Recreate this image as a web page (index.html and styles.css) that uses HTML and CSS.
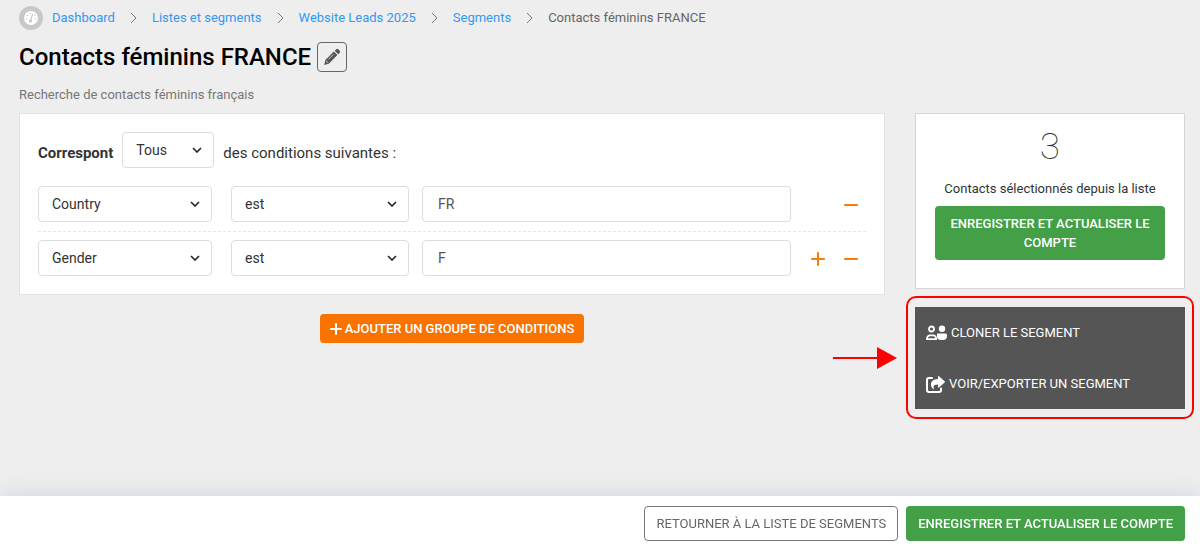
FILE: index.html
```html
<!DOCTYPE html>
<html lang="fr">

<head>
    <meta charset="UTF-8">
    <meta name="viewport" content="width=device-width, initial-scale=1.0">
    <title>Contacts féminins FRANCE</title>
    <link rel="stylesheet" href="styles.css">
</head>

<body>
    <nav class="breadcrumb" aria-label="Fil d'Ariane">
        <span class="gauge">
            <svg viewBox="0 0 24 24" width="24" height="24" aria-hidden="true">
                <circle cx="12" cy="12" r="12" fill="#c8c8c8"/>
                <circle cx="12" cy="12" r="7" fill="#fff"/>
                <g fill="none" stroke="#c8c8c8" stroke-linecap="round">
                    <path d="M11.5 14.5l2-6" stroke-width="1.2"/>
                    <path d="M7.5 13h.1M8.3 9.3h.1M11 7.3h.1M15.8 9.3h.1M16.5 13h.1" stroke-width="1.4"/>
                </g>
                <circle cx="11.5" cy="15" r="1.6" fill="#c8c8c8"/>
            </svg>
        </span>
        <a href="#">Dashboard</a>
        <svg class="sep" viewBox="0 0 7 12"><path d="M1 1l5 5-5 5"/></svg>
        <a href="#">Listes et segments</a>
        <svg class="sep" viewBox="0 0 7 12"><path d="M1 1l5 5-5 5"/></svg>
        <a href="#">Website Leads 2025</a>
        <svg class="sep" viewBox="0 0 7 12"><path d="M1 1l5 5-5 5"/></svg>
        <a href="#">Segments</a>
        <svg class="sep" viewBox="0 0 7 12"><path d="M1 1l5 5-5 5"/></svg>
        <span>Contacts féminins FRANCE</span>
    </nav>

    <header class="title-bar">
        <h1>Contacts féminins FRANCE</h1>
        <button type="button" class="btn-edit" aria-label="Modifier">
            <svg viewBox="0 0 18 18" width="18" height="18" aria-hidden="true">
                <path fill="#555" d="M13.2 1.3a1.5 1.5 0 0 1 2.1 0l1.4 1.4a1.5 1.5 0 0 1 0 2.1l-1.5 1.5-3.5-3.5zM10.9 3.6l3.5 3.5-8.6 8.6L1.2 17l1.2-4.9z"/>
                <path stroke="#eee" stroke-width=".7" d="M10.500 6.300L5.500 11.300M3 13.200l1 .2.3 1 .9.3" fill="none"/>
            </svg>
        </button>
    </header>
    <p class="description">Recherche de contacts féminins français</p>

    <div class="layout">
        <main>
            <form class="card conditions" id="segment">
                <div class="match">
                    <label for="match"><strong>Correspont</strong></label>
                    <select id="match" class="match-select">
                        <option>Tous</option>
                    </select>
                    <span class="match-text">des conditions suivantes :</span>
                </div>

                <div class="condition">
                    <select class="field" aria-label="Champ">
                        <option>Country</option>
                    </select>
                    <select class="operator" aria-label="Opérateur">
                        <option>est</option>
                    </select>
                    <input type="text" class="value" aria-label="Valeur" value="FR">
                    <div class="actions">
                        <button type="button" class="btn-icon" aria-label="Supprimer">
                            <svg viewBox="0 0 14 14"><path d="M1 7h12"/></svg>
                        </button>
                    </div>
                </div>

                <div class="condition">
                    <select class="field" aria-label="Champ">
                        <option>Gender</option>
                    </select>
                    <select class="operator" aria-label="Opérateur">
                        <option>est</option>
                    </select>
                    <input type="text" class="value" aria-label="Valeur" value="F">
                    <div class="actions">
                        <button type="button" class="btn-icon" aria-label="Ajouter">
                            <svg viewBox="0 0 14 14"><path d="M1 7h12M7 1v12"/></svg>
                        </button>
                        <button type="button" class="btn-icon" aria-label="Supprimer">
                            <svg viewBox="0 0 14 14"><path d="M1 7h12"/></svg>
                        </button>
                    </div>
                </div>
            </form>

            <div class="add-group">
                <button type="button" class="btn btn-orange">
                    <svg viewBox="0 0 12 12" width="12" height="12" aria-hidden="true"><path d="M1 6h10M6 1v10" stroke="#fff" stroke-width="2" stroke-linecap="round"/></svg>
                    AJOUTER UN GROUPE DE CONDITIONS
                </button>
            </div>
        </main>

        <aside>
            <div class="card summary">
                <div class="count">3</div>
                <p>Contacts sélectionnés depuis la liste</p>
                <button type="submit" form="segment" class="btn btn-green">ENREGISTRER ET ACTUALISER LE COMPTE</button>
            </div>

            <div class="tools">
                <a href="#">
                    <svg viewBox="0 0 21 16" width="21" height="16" aria-hidden="true">
                        <g fill="none" stroke="#fff" stroke-width="1.8">
                            <circle cx="5.5" cy="4" r="2.5"/>
                            <path d="M1 14.200v-.8a3 3 0 0 1 3-3h3.200a3 3 0 0 1 3 3v.8z" stroke-linejoin="round"/>
                        </g>
                        <circle cx="16" cy="3.8" r="3.200" fill="#fff"/>
                        <path fill="#fff" d="M11.500 8.500h8a1.500 1.500 0 0 1 1.500 1.500v1a4 4 0 0 1-4 4h-2a4 4 0 0 1-4-4v-2a.5.5 0 0 1 .5-.5z"/>
                    </svg>
                    CLONER LE SEGMENT
                </a>
                <a href="#">
                    <svg viewBox="0 0 19 17" width="19" height="17" aria-hidden="true">
                        <path d="M6 2H3a2 2 0 0 0-2 2v10a2 2 0 0 0 2 2h10a2 2 0 0 0 2-2v-1.500" fill="none" stroke="#fff" stroke-width="2" stroke-linecap="round"/>
                        <path fill="#fff" d="M12 .6c0-.6.6-.8 1-.4l5.600 5c.4.4.4.8 0 1.200l-5.600 5c-.4.4-1 .1-1-.5V8.500c-3.500 0-5 1-4.200 4.200.1.500-.4.700-.8.3C3.200 9.500 4.500 3.200 12 3z"/>
                    </svg>
                    VOIR/EXPORTER UN SEGMENT
                </a>
                <div class="highlight"></div>
                <svg class="arrow" viewBox="0 0 64 24" width="64" height="24" aria-hidden="true">
                    <path d="M0 12h46" stroke="#f00" stroke-width="2"/>
                    <path d="M44 1l20 11-20 11z" fill="#f00"/>
                </svg>
            </div>
        </aside>
    </div>

    <footer>
        <button type="button" class="btn btn-outline">RETOURNER À LA LISTE DE SEGMENTS</button>
        <button type="submit" form="segment" class="btn btn-green">ENREGISTRER ET ACTUALISER LE COMPTE</button>
    </footer>
</body>

</html>
```

FILE: styles.css
```css
* {
    margin: 0;
    padding: 0;
    box-sizing: border-box;
}

body {
    min-height: 100vh;
    padding: 5px 15px 64px 19px;
    font-family: Roboto, sans-serif;
    font-size: 13px;
    line-height: 18px;
    color: #333;
    background-color: #eee;
}

a {
    color: #3598f3;
    text-decoration: none;
}

button,
input,
select {
    font-family: inherit;
    font-size: 14px;
    color: inherit;
}

button {
    cursor: pointer;
}

/* Breadcrumb */
.breadcrumb {
    display: flex;
    align-items: center;
    height: 25px;
    color: #666;
}

.gauge {
    height: 24px;
    margin-right: 9px;
}

.sep {
    width: 7px;
    height: 12px;
    margin: 0 15px;
    fill: none;
    stroke: #777;
}

/* Title */
.title-bar {
    display: flex;
    align-items: center;
    gap: 6px;
    margin-top: 12px;
}

h1 {
    font-size: 24px;
    line-height: 30px;
    font-weight: 500;
    color: #000;
}

.btn-edit {
    display: flex;
    align-items: center;
    justify-content: center;
    width: 30px;
    height: 30px;
    background: none;
    border: 1px solid #666;
    border-radius: 4px;
}

.description {
    margin: 14px 0 9px;
    color: #777;
}

.layout {
    display: grid;
    grid-template-columns: 1fr 270px;
    gap: 30px;
    align-items: start;
}

.card {
    background-color: #fff;
    border: 1px solid #e3e3e3;
}

/* Conditions */
.conditions {
    padding: 18px;
}

select,
.value {
    height: 36px;
    padding: 0 15px;
    background-color: #fff;
    border: 1px solid #ddd;
    border-radius: 4px;
}

select {
    appearance: none;
    padding: 0 30px 0 13px;
    background-image: url("data:image/svg+xml,%3Csvg xmlns='http://www.w3.org/2000/svg' width='10' height='6'%3E%3Cpath d='M1 1l4 4 4-4' fill='none' stroke='%23222' stroke-width='1.6'/%3E%3C/svg%3E");
    background-repeat: no-repeat;
    background-position: right 11px center;
}

.match {
    display: flex;
    align-items: center;
    gap: 9px;
    margin-bottom: 9px;
    font-size: 15px;
}

.match label,
.match-text {
    padding-top: 6px;
}

.match-select {
    width: 92px;
}

.condition {
    display: grid;
    grid-template-columns: 193fr 191fr 369fr 75px;
    align-items: center;
    padding: 9px 0;
}

.condition + .condition {
    padding: 8px 0 0;
    border-top: 1px dashed #e6e6e6;
}

.field {
    margin-right: 19px;
}

.operator {
    margin-right: 13px;
}

.value {
    min-width: 0;
    color: #555;
}

.actions {
    display: flex;
    justify-content: flex-end;
    gap: 19px;
    padding: 2px 8px 0 0;
}

.btn-icon {
    width: 14px;
    height: 14px;
    background: none;
    border: none;
}

.btn-icon svg {
    display: block;
    stroke: #f97b0c;
    stroke-width: 2;
    stroke-linecap: round;
}

/* Buttons */
.btn {
    padding: 7px 11px;
    line-height: 19px;
    font-size: 13px;
    color: #fff;
    border: 1px solid transparent;
    border-radius: 4px;
}

.btn-green {
    font-weight: 500;
    background-color: #43a047;
}

.btn-orange {
    display: flex;
    align-items: center;
    gap: 3px;
    padding: 4px 9px;
    font-weight: 500;
    background-color: #f97300;
}

.btn-outline {
    color: #666;
    background-color: #fff;
    border-color: #777;
}

.add-group {
    display: flex;
    justify-content: center;
    margin-top: 19px;
}

/* Sidebar */
.summary {
    padding: 14px 19px 28px;
    border-color: #d5d5d5;
    text-align: center;
}

.count {
    font-size: 37px;
    line-height: 38px;
    font-weight: 100;
}

.summary p {
    margin: 14px 0 8px;
}

.summary .btn {
    width: 100%;
}

.tools {
    position: relative;
    display: flex;
    flex-direction: column;
    gap: 33px;
    margin-top: 18px;
    padding: 17px 11px 16px;
    background-color: #555;
}

.tools a {
    display: flex;
    align-items: center;
    gap: 4px;
    color: #fff;
}

/* Red frame and arrow over the tools */
.highlight {
    position: absolute;
    inset: -11px -9px -10px;
    border: 2px solid #f00;
    border-radius: 10px;
    pointer-events: none;
}

.arrow {
    position: absolute;
    top: 39px;
    right: 288px;
}

footer {
    position: fixed;
    left: 0;
    right: 0;
    bottom: 0;
    display: flex;
    justify-content: flex-end;
    gap: 8px;
    padding: 10px 15px;
    background-color: #fff;
    box-shadow: 0 0 20px rgba(120, 145, 190, 0.3);
}
```
